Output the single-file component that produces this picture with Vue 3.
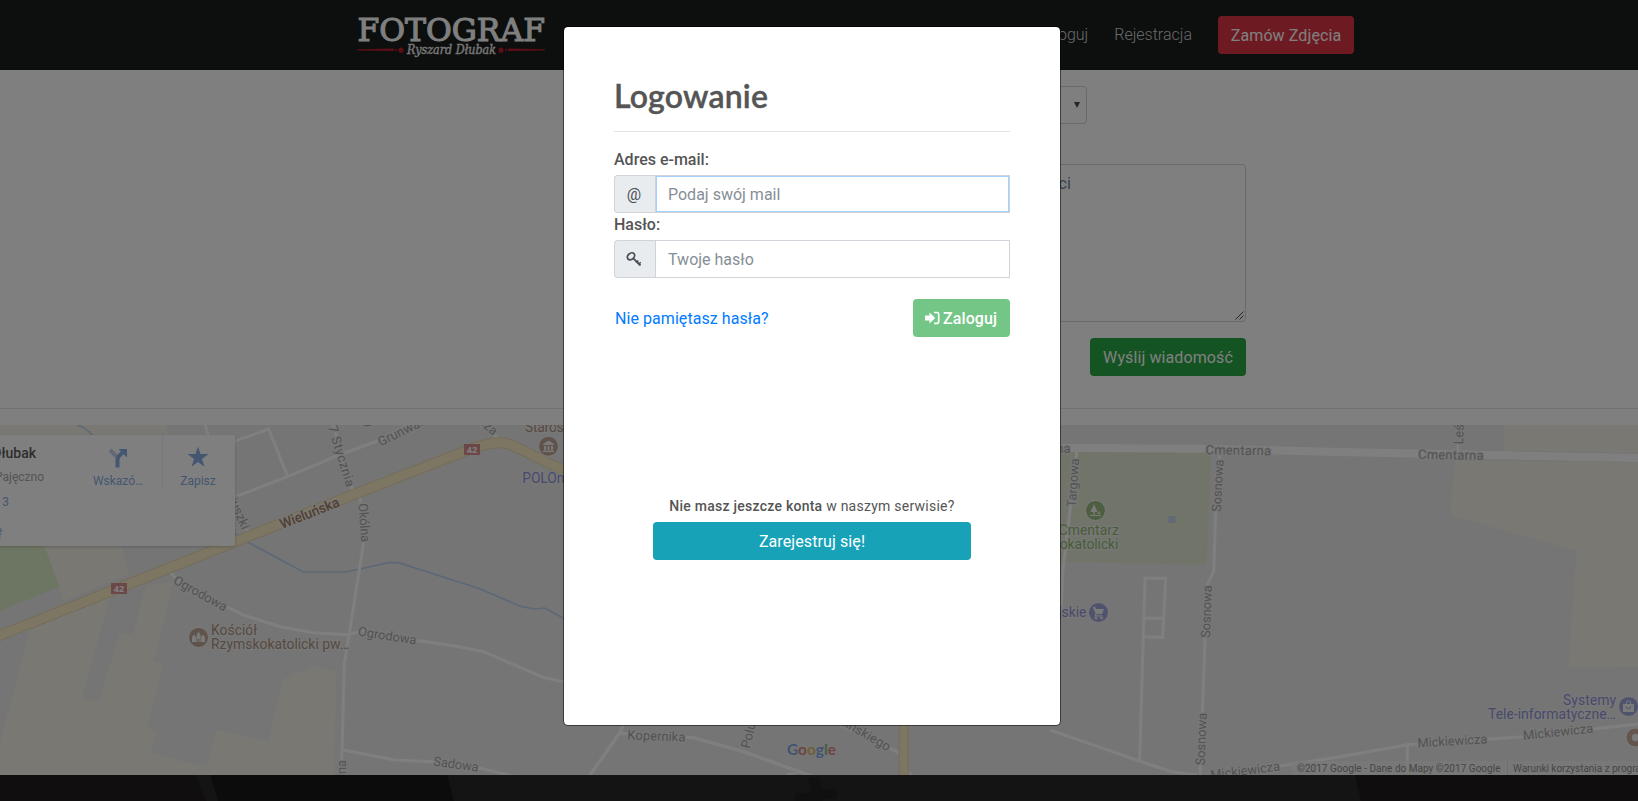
<script setup>
const road = '#a6a6a6'
const brown = '#b0937f'
const indigo = '#9094da'
const green = '#8fbb6b'

// Map labels: t text, x/y anchor on the baseline, r rotation, w drawn length, a anchor
const labels = [
  { t: 'Ogrodowa', x: 172.5, y: 583, r: 29, w: 59, c: road },
  { t: 'Kościuszki', x: 242, y: 530.5, r: 67, w: 62, c: road, a: 'end' },
  { t: 'Wieluńska', x: 282, y: 529, r: -21.5, w: 63, c: '#a4805c', s: 14, b: 500 },
  { t: '17 Stycznia', x: 346.5, y: 487.5, r: 73, w: 71, c: road, a: 'end' },
  { t: 'Grunwaldzka', x: 380.5, y: 446.5, r: -26, w: 76, c: road },
  { t: 'Parczysza', x: 493, y: 436, r: 42, w: 60, c: road, a: 'end' },
  { t: 'Okólna', x: 358.5, y: 503.5, r: 86, w: 39, c: road },
  { t: 'Ogrodowa', x: 357.5, y: 635.5, r: 9, w: 59, c: road },
  { t: 'Sadowa', x: 433, y: 765.5, r: 8, w: 45.5, c: road },
  { t: 'Okólna', x: 346, y: 760, r: -90, w: 39, c: road, a: 'end' },
  { t: 'Starostwo', x: 525, y: 432, w: 61, c: brown, s: 14 },
  { t: 'POLOmarket', x: 522.3, y: 483, w: 77, c: indigo, s: 14 },
  { t: 'Kościół', x: 211, y: 635, w: 46, c: brown, s: 14 },
  { t: 'Rzymskokatolicki pw…', x: 211, y: 649, w: 138, c: brown, s: 14 },
  { t: 'Kopernika', x: 627.3, y: 739.5, r: 2, w: 58, c: road },
  { t: 'Południowa', x: 749.5, y: 749, r: -76, w: 68, c: road },
  { t: 'Kilińskiego', x: 887.5, y: 751.5, r: 30, w: 64, c: road, a: 'end' },
  { t: 'Cmentarna', x: 1070.6, y: 452.6, w: 65.5, c: road, a: 'end' },
  { t: 'Cmentarna', x: 1205.5, y: 454.2, r: 1, w: 65.5, c: road },
  { t: 'Cmentarna', x: 1418, y: 458.8, r: 1, w: 65.5, c: road },
  { t: 'Targowa', x: 1075.8, y: 507.5, r: -86, w: 49, c: road },
  { t: 'Sosnowa', x: 1220.8, y: 512, r: -87, w: 52.5, c: road },
  { t: 'Sosnowa', x: 1210, y: 638, r: -88, w: 52.5, c: road },
  { t: 'Sosnowa', x: 1204.8, y: 765.5, r: -88, w: 52.5, c: road },
  { t: 'Cmentarz', x: 1119, y: 535, w: 60.5, c: green, s: 14, a: 'end' },
  { t: 'Rzymskokatolicki', x: 1118.5, y: 549, w: 107, c: green, s: 14, a: 'end' },
  { t: 'Miejskie', x: 1086.5, y: 617, w: 51, c: indigo, s: 14, a: 'end' },
  { t: 'Mickiewicza', x: 1211, y: 779.5, r: -7.5, w: 70, c: road },
  { t: 'Mickiewicza', x: 1417.7, y: 747.5, r: -3.5, w: 70, c: road },
  { t: 'Mickiewicza', x: 1523.5, y: 740, r: -6, w: 70.5, c: road },
  { t: 'Leśna', x: 1463, y: 444.5, r: -88, w: 34, c: road },
  { t: 'Systemy', x: 1616, y: 705, w: 53, c: indigo, s: 14, a: 'end' },
  { t: 'Tele-informatyczne…', x: 1616, y: 719, w: 128, c: indigo, s: 14, a: 'end' },
]
</script>

<template>
  <div class="page">
    <header class="topbar">
      <svg class="logo" width="190" height="46" viewBox="0 0 190 46">
        <text class="logo-main" x="0.500" y="28.600" textLength="187.500" lengthAdjust="spacingAndGlyphs">FOTOGRAF</text>
        <g fill="#b81e28">
          <path d="M0 37.3l37-.8v2.4L0 38.500zM188 37.3l-37-.8v2.4l37-.4z" />
          <circle cx="39" cy="38" r="1.1" /><circle cx="149" cy="38" r="1.1" />
          <circle cx="44" cy="38.2" r="2.6" /><circle cx="144" cy="38.2" r="2.6" />
        </g>
        <text class="logo-sub" x="50" y="42" textLength="89" lengthAdjust="spacingAndGlyphs">Ryszard Dłubak</text>
      </svg>
      <nav class="nav">
        <a>Zaloguj</a>
        <a>Rejestracja</a>
        <button class="btn danger">Zamów Zdjęcia</button>
      </nav>
    </header>

    <main class="contact">
      <div class="select"><span class="caret"></span></div>
      <div class="message">
        <span>Treść wiadomości</span>
        <svg class="grip" width="9" height="9" viewBox="0 0 9 9"><path d="M.5 8.500l8-8M4.500 8.500l4-4" stroke="#444" /></svg>
      </div>
      <button class="btn success send">Wyślij wiadomość</button>
    </main>

    <section class="map">
      <svg width="1638" height="350" viewBox="0 425 1638 350">
        <rect y="425" width="1638" height="350" fill="#ebebeb" />
        <!-- western districts -->
        <g transform="translate(0 400) scale(.33333)">
          <path fill="#f3f0e6" d="M0 75H500L508 130H0zM130 430H360L387 522L190 603L170 550zM0 1030L90 690L330 590L245 893L295 905L360 700L400 705L437 555L520 545L462 785L490 793L440 985L467 993L455 1060L620 1103L650 990L805 1025L850 840L885 820L920 815L930 795L1008 815L1003 1125H0z" />
          <path fill="#dbebc6" d="M0 430H130L178 560L0 632z" />
          <path fill="none" stroke="#bbcfeb" stroke-width="5" d="M232 75C255 80 265 95 285 112M700 395L715 410L750 430L910 516H1035L1065 510L1165 488H1195L1435 565L1565 620L1605 627L1635 624L1700 660" />
          <g fill="none" stroke="#fff" stroke-width="9" stroke-linejoin="round">
            <path d="M615 75L640 150M700 125L806 87L863 230M700 293L863 230L1010 168L1140 120L1260 55M1000 75L1058 270L1080 290L1092 420L1048 700L1033 790L1024 1130M690 250L745 400" />
            <path d="M512 518L560 570L690 625L730 645L840 680L940 698L1048 704L1085 692L1240 720L1365 738L1450 755L1630 832L1700 848M1030 1050L1185 1080L1300 1085L1440 1105L1540 1128M1440 75L1510 125" />
          </g>
          <path fill="none" stroke="#e6d8ae" stroke-width="33" d="M-10 710L1065 282L1400 152Q1500 112 1545 140L1710 220" />
          <path fill="none" stroke="#f8ecc6" stroke-width="27" d="M-10 710L1065 282L1400 152Q1500 112 1545 140L1710 220" />
        </g>
        <!-- southern streets -->
        <g transform="translate(560 480) scale(.33333)">
          <path fill="none" stroke="#fff" stroke-width="10" d="M90 885L178 760L195 725M178 760L400 773L550 815L760 890M680 885L720 873M840 735L1020 820M1040 875L1060 890" />
          <path stroke="#e6d8ae" stroke-width="30" d="M1031 735V885" />
          <path stroke="#f8ecc6" stroke-width="24" d="M1031 735V885" />
        </g>
        <!-- cemetery and eastern streets -->
        <g transform="translate(1050 400) scale(.33333)">
          <path fill="#e2ebd3" d="M20 130L485 135L470 495L20 485z" />
          <path fill="#c6d4eb" d="M355 348h22v21h-22z" />
          <g fill="none" stroke="#fff" stroke-width="9">
            <path stroke-width="24" d="M0 143L460 146L900 157L1800 175" />
            <path d="M80 155L52 400L38 520L34 640M510 160L497 340L491 515L472 553L465 720L450 1125M269 1082L285 535H347L338 712L282 710M283 655H341M0 990L265 1082L365 1115L440 1125M690 1098L870 1070L1072 1034L1420 1010L1780 970M1072 1034V1125" />
          </g>
        </g>
        <g transform="translate(1340 400) scale(.33333)">
          <path fill="#f3f0e6" d="M493 75H900V158L493 150zM346 182L900 188V800L685 803L710 452L330 345z" />
          <path stroke="#fff" stroke-width="8" d="M354 130V160" />
        </g>

        <g v-for="(p, i) in [[119, 588.5], [472, 449.5]]" :key="i" :transform="`translate(${p[0]} ${p[1]})`">
          <rect x="-8" y="-5.500" width="16" height="11" fill="#d68f8f" />
          <text y="3.500" class="shield">42</text>
        </g>

        <text v-for="(l, i) in labels" :key="i" class="label" :fill="l.c" :font-size="l.s || 13" :font-weight="l.b || 400"
          :text-anchor="l.a || 'start'" :textLength="l.w" :transform="`translate(${l.x} ${l.y}) rotate(${l.r || 0})`">{{ l.t }}</text>

        <g stroke="#f5f5f5" stroke-width="1">
          <g fill="#bfa797"><circle cx="198.500" cy="637.500" r="10" /><circle cx="548.500" cy="446.300" r="10" /><circle cx="367.500" cy="417.500" r="9.500" /></g>
          <circle cx="1095.500" cy="510.500" r="10" fill="#9cbd80" />
          <circle cx="1098.500" cy="612.500" r="10" fill="#a1a6da" />
          <circle cx="1628.500" cy="706.500" r="10" fill="#a1a6da" />
          <circle cx="1635.500" cy="737.500" r="9.500" fill="#c8ad9c" />
        </g>
        <g fill="#f4f4f4">
          <path d="M192 642v-5l2-2.500 2 2.500v5zM201 642v-5l2-2.500 2 2.500v5zM196.500 642v-7l2-3.500 2 3.500v7h-1.200v-3h-1.600v3z" />
          <path d="M543 444l5.500-3.500 5.500 3.500v1h-11zM544 446h2v4h-2zM547.500 446h2v4h-2zM551 446h2v4h-2zM543 450.500h11v1.500h-11z" />
          <path d="M1094 504l3.500 8h-2.800v3h-1.400v-3h-2.800zM1090 515h11v1h-11zM1099 511l1.700 3h-3.400z" />
          <path d="M1093 607h2.200l1 2h7.800l-2 5h-5.500l-.5 1.200h6.500v1.300h-8l1-3-2-5h-.5z" /><circle cx="1096" cy="618" r="1.300" /><circle cx="1101.500" cy="618" r="1.300" />
          <path d="M1623 704h11v8h-11z" /><circle cx="1635.500" cy="737.500" r="3.700" />
        </g>
        <path d="M1626.300 704.500v-1.500a2.200 2.200 0 0 1 4.400 0v1.500" fill="none" stroke="#f4f4f4" />
        <path d="M1626.300 706.500a2.200 2.200 0 0 0 4.400 0" fill="none" stroke="#a1a6da" />

        <text x="787" y="754.500" class="google" textLength="49" lengthAdjust="spacingAndGlyphs"><tspan fill="#82a9e6">G</tspan><tspan fill="#dd8782">o</tspan><tspan fill="#dfc06a">o</tspan><tspan fill="#82a9e6">g</tspan><tspan fill="#85bd8e">l</tspan><tspan fill="#dd8782">e</tspan></text>

        <rect x="1292" y="761" width="346" height="14" fill="#f3f3f3" opacity=".75" />
        <path d="M1507.500 761v14" stroke="#ddd" />
        <text x="1297" y="771.700" class="legal" textLength="203.500">©2017 Google - Dane do Mapy ©2017 Google</text>
        <text x="1513" y="771.700" class="legal" textLength="142">Warunki korzystania z programu</text>
      </svg>

      <aside class="place">
        <div class="place-text">
          <b>Ryszard Dłubak</b>
          <span>98-330 Pajęczno</span>
          <a>Opinie: 3</a>
          <a>Wyświetl większą mapę</a>
        </div>
        <div class="place-action directions">
          <svg width="20" height="20" viewBox="0 0 20 20">
            <path d="M2 2l6.500 6.500" stroke="#c3d3ea" stroke-width="4" />
            <path d="M9.500 19.500V12q0-3 2.500-5l3-3" fill="none" stroke="#8aade0" stroke-width="4" />
            <path d="M10.500 1H19v8.500z" fill="#8aade0" />
          </svg>
          <a>Wskazó…</a>
        </div>
        <div class="place-action save">
          <svg width="22" height="22" viewBox="0 0 22 22"><path fill="#8aade0" d="M11 .5l2.500 7.600H21.500L15 12.900l2.500 7.800L11 16l-6.500 4.700L7 12.900.5 8.100h8z" /></svg>
          <a>Zapisz</a>
        </div>
      </aside>
    </section>

    <footer class="footer">
      <svg width="1638" height="26" viewBox="0 0 1638 26">
        <rect width="1638" height="26" fill="#292929" />
        <path fill="#201c1c" d="M0 0H196L206 26H0z" /><path fill="#181818" d="M210 0H447L454 26H218z" />
        <path fill="#1f1a1a" d="M1355 0H1638V26H1361z" />
        <path fill="#202020" d="M808 2h12l1 12h16v10h-14v2h-28v-8h16z" />
      </svg>
    </footer>

    <div class="backdrop">
      <form class="modal">
        <h2>Logowanie</h2>
        <hr />
        <label>Adres e-mail:</label>
        <div class="group">
          <span class="addon at">@</span>
          <div class="field focused">Podaj swój mail</div>
        </div>
        <label>Hasło:</label>
        <div class="group">
          <span class="addon">
            <svg width="16" height="16" viewBox="0 0 16 16" fill="none" stroke="#495057">
              <ellipse cx="5" cy="5.300" rx="4" ry="3" transform="rotate(-40 5 5.300)" stroke-width="1.800" />
              <path d="M7.300 7.300l7.200 7.200" stroke-width="1.800" /><path d="M10.300 11.700l2-2.300M12.500 13.500l2.200-2.300" stroke-width="1.500" />
            </svg>
          </span>
          <div class="field">Twoje hasło</div>
        </div>
        <div class="actions">
          <a>Nie pamiętasz hasła?</a>
          <button class="btn login" type="button">
            <svg width="15" height="14" viewBox="0 0 15 14"><path fill="#fff" d="M0 4.600h4.500V1.500L10.200 7l-5.700 5.500V9.400H0z" /><path d="M9 1.500h3q1.700 0 1.700 1.700v7.400q0 1.700-1.700 1.700H9" fill="none" stroke="#fff" stroke-width="1.700" /></svg>
            Zaloguj
          </button>
        </div>
        <p><b>Nie masz jeszcze konta</b> w naszym serwisie?</p>
        <button class="btn register" type="button">Zarejestruj się!</button>
      </form>
    </div>
  </div>
</template>

<style>
body { margin: 0; overflow: hidden; }
</style>

<style scoped>
* { box-sizing: border-box; }
.page { position: relative; width: 1638px; height: 801px; overflow: hidden; background: #fff; font: 16px/24px Roboto, sans-serif; color: #555; display: flex; flex-direction: column; }
.topbar { height: 70px; flex: none; background: #1a1e1c; padding: 0 284px 0 357px; display: flex; justify-content: space-between; }
.logo { margin-top: 12px; overflow: visible; }
.logo-main { font: 32.5px "DejaVu Serif", serif; fill: #fff; stroke: #fff; stroke-width: 1.1px; }
.logo-sub { font: italic 13px "DejaVu Serif", serif; fill: #eee; stroke: #eee; stroke-width: .4px; }
.nav { display: flex; align-items: center; gap: 26px; color: #d0d0d0; font-weight: 300; }
.btn { height: 38px; border: 0; border-radius: 4px; padding: 2px 12px 0; font: 16px/24px Roboto, sans-serif; letter-spacing: .1px; color: #fff; white-space: nowrap; }
.danger { width: 136px; background: #dc3545; }
.success { width: 156px; background: #28a745; }
.contact { height: 339px; flex: none; border-bottom: 1px solid #e2e2e2; padding: 16px 392px 0 926px; display: flex; flex-direction: column; }
.select { width: 161px; height: 38px; border: 1px solid #ced4da; border-radius: 4px; display: flex; align-items: center; justify-content: flex-end; padding-right: 6px; }
.caret { border: 3px solid transparent; border-top: 6px solid #444c55; border-bottom: 0; }
.message { margin-top: 40px; height: 158px; flex: none; border: 1px solid #ced4da; border-radius: 4px; padding: 7px 1px 1px 14px; color: #6f83a3; display: flex; justify-content: space-between; }
.grip { align-self: flex-end; }
.send { margin-top: 16px; align-self: flex-end; }
.map { position: relative; height: 350px; flex: none; margin-top: 16px; }
.map > svg, .footer svg { display: block; }
.label { font-family: Roboto, sans-serif; paint-order: stroke; stroke: #efefef; stroke-width: 2.5px; stroke-linejoin: round; }
.shield { font: bold 9px "Open Sans", sans-serif; fill: #fff; text-anchor: middle; }
.google { font: 700 15.5px Lato, sans-serif; stroke: #eee; stroke-width: 1.500px; paint-order: stroke; }
.legal { font: 10px Roboto, sans-serif; fill: #8c8c8c; }
.place { position: absolute; left: -100px; top: 10px; width: 335px; height: 111px; background: #fff; border-radius: 2px; box-shadow: 0 1px 3px rgba(0,0,0,.2); display: flex; justify-content: flex-end; font-size: 12px; line-height: 16px; }
.place a { color: #8aade0; }
.place-text { display: flex; flex-direction: column; align-items: flex-end; width: 144px; flex: none; padding-top: 9px; white-space: nowrap; margin-right: 38px; }
.place-text b { font-size: 14px; line-height: 18px; font-weight: 500; color: #5c5c5c; margin-right: 8px; }
.place-text span { margin-top: 7px; color: #a8a8a8; }
.place-text a { margin: 9px 35px 0 0; }
.place-text a:last-child { margin: 13px 42px 0 0; }
.place-action { display: flex; flex-direction: column; align-items: center; padding-top: 11px; height: 54px; font-size: 12px; }
.directions { width: 81px; padding-top: 13px; padding-right: 8px; border-right: 1px solid #efefef; }
.directions a, .save a { margin-top: 5px; }
.save { width: 72px; padding-right: 2px; }
.footer { height: 26px; flex: none; }
.backdrop { position: absolute; inset: 0; background: rgba(0,0,0,.5); padding: 26px 0 0 563px; }
.modal { width: 498px; height: 700px; border: 1px solid rgba(0,0,0,.5); border-radius: 5px; background: #fff; background-clip: padding-box; padding: 50px; display: flex; flex-direction: column; }
h2 { margin: 0; font: 600 32px/38px Lato, sans-serif; letter-spacing: .2px; -webkit-text-stroke: .4px #555; color: #555; }
hr { width: 100%; height: 1px; flex: none; border: 0; background: #e5e5e5; margin: 16px 0; }
label { font-weight: 500; margin-bottom: 3px; }
.group { display: flex; height: 38px; flex: none; }
.addon { width: 41px; border: 1px solid #ced4da; border-right: 0; border-radius: 4px 0 0 4px; background: #e9ecef; color: #495057; display: flex; align-items: center; justify-content: center; padding-right: 2px; }
.at { padding-top: 1px; }
.field { flex: 1; border: 1px solid #ced4da; padding: 7px 12px 5px; color: #868e96; }
.focused { box-shadow: inset 0 0 0 1px #a5cfff; }
.actions { margin-top: 21px; height: 38px; display: flex; align-items: center; justify-content: space-between; color: #007bff; padding-left: 1px; letter-spacing: .06px; }
.actions a { padding-top: 2px; }
.login { width: 97px; background: #73c686; display: flex; align-items: center; gap: 3px; font-weight: 500; }
.login svg { margin-top: -2px; }
p { margin: 159px 0 5px; font-size: 14px; line-height: 21px; text-align: center; letter-spacing: .25px; }
p b { font-weight: 500; }
.register { width: 318px; align-self: center; background: #17a2b8; }
</style>
